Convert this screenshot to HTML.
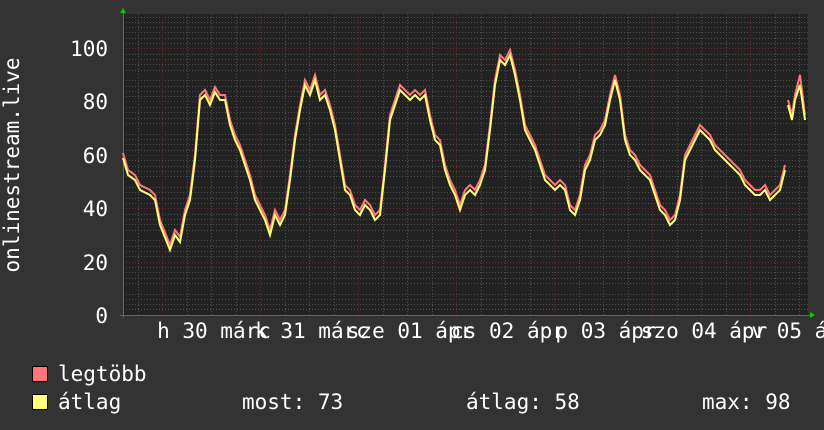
<!DOCTYPE html>
<html><head><meta charset="utf-8"><style>
body{margin:0;background:#333;}
svg{display:block}
text{font-family:"DejaVu Sans Mono","Liberation Mono",monospace;fill:#fff;font-size:21px}
</style></head><body>
<svg width="824" height="430" viewBox="0 0 824 430" xmlns="http://www.w3.org/2000/svg">
<rect width="824" height="430" fill="#333"/>
<rect x="123" y="14" width="685" height="301" fill="#222"/>
<g stroke="#505050" stroke-width="1" stroke-dasharray="1,2" fill="none">
<path d="M123 309.5H808M123 304.5H808M123 299.5H808M123 294.5H808M123 283.5H808M123 278.5H808M123 272.5H808M123 267.5H808M123 256.5H808M123 251.5H808M123 246.5H808M123 240.5H808M123 230.5H808M123 224.5H808M123 219.5H808M123 214.5H808M123 203.5H808M123 198.5H808M123 192.5H808M123 187.5H808M123 176.5H808M123 171.5H808M123 166.5H808M123 160.5H808M123 150.5H808M123 144.5H808M123 139.5H808M123 134.5H808M123 123.5H808M123 118.5H808M123 112.5H808M123 107.5H808M123 96.5H808M123 91.5H808M123 86.5H808M123 80.5H808M123 70.5H808M123 64.5H808M123 59.5H808M123 54.5H808M123 43.5H808M123 38.5H808M123 32.5H808M123 27.5H808M123 22.5H808M123 17.5H808"/>
<path d="M138.5 14V315M187.5 14V315M211.5 14V315M236.5 14V315M285.5 14V315M309.5 14V315M334.5 14V315M383.5 14V315M407.5 14V315M432.5 14V315M481.5 14V315M505.5 14V315M530.5 14V315M579.5 14V315M603.5 14V315M628.5 14V315M677.5 14V315M701.5 14V315M726.5 14V315M775.5 14V315M799.5 14V315"/>
</g>
<g stroke="#6a2a2a" stroke-width="1" stroke-dasharray="1,2" fill="none">
<path d="M123 48.5H808M123 101.5H808M123 155.5H808M123 208.5H808M123 262.5H808"/>
<path d="M162.5 14V318M260.5 14V318M358.5 14V318M456.5 14V318M554.5 14V318M652.5 14V318M750.5 14V318"/>
</g>
<line x1="120" y1="315.5" x2="812" y2="315.5" stroke="#666"/>
<line x1="123.5" y1="12" x2="123.5" y2="318" stroke="#666"/>
<polygon points="120,13 126,13 123,8" fill="#0c0"/>
<polygon points="810,312 810,318 815,315" fill="#0c0"/>
<g transform="translate(0,-5)">
<polyline fill="none" stroke="#f77" stroke-width="2" points="123,158 128,175 135,180 140,190 150,195 155,200 160,225 170,250 175,235 180,242 185,215 190,200 195,160 200,100 205,95 210,105 215,92 220,100 225,100 230,125 235,140 240,150 245,165 250,180 255,200 260,210 265,220 270,235 275,215 280,225 285,215 290,180 295,140 300,110 305,85 310,95 315,80 320,100 325,95 330,110 335,130 340,160 345,190 350,195 355,210 360,215 365,205 370,210 375,220 380,215 385,170 390,120 395,105 400,90 405,95 410,100 415,95 420,100 425,95 430,120 435,140 440,145 445,170 450,185 455,195 460,210 465,195 470,190 475,195 480,185 485,170 490,130 495,85 500,60 505,65 510,55 515,75 520,100 525,130 530,140 535,150 540,165 545,180 550,185 555,190 560,185 565,190 570,210 575,215 580,200 585,170 590,160 595,140 600,135 605,125 610,100 615,80 620,100 625,140 630,155 635,160 640,170 645,175 650,180 655,195 660,210 665,215 670,225 675,220 680,200 685,160 690,150 695,140 700,130 705,135 710,140 715,150 720,155 725,160 730,165 735,170 740,175 745,185 750,190 755,195 760,195 765,190 770,200 775,195 780,190 785,170"/>
<polyline fill="none" stroke="#f77" stroke-width="2" points="788,105 792,120 795,100 800,80 805,120"/>
</g>
<polyline fill="none" stroke="#ff7" stroke-width="2" points="123,158 128,175 135,180 140,190 150,195 155,200 160,225 170,250 175,235 180,242 185,215 190,200 195,160 200,100 205,95 210,105 215,92 220,100 225,100 230,125 235,140 240,150 245,165 250,180 255,200 260,210 265,220 270,235 275,215 280,225 285,215 290,180 295,140 300,110 305,85 310,95 315,80 320,100 325,95 330,110 335,130 340,160 345,190 350,195 355,210 360,215 365,205 370,210 375,220 380,215 385,170 390,120 395,105 400,90 405,95 410,100 415,95 420,100 425,95 430,120 435,140 440,145 445,170 450,185 455,195 460,210 465,195 470,190 475,195 480,185 485,170 490,130 495,85 500,60 505,65 510,55 515,75 520,100 525,130 530,140 535,150 540,165 545,180 550,185 555,190 560,185 565,190 570,210 575,215 580,200 585,170 590,160 595,140 600,135 605,125 610,100 615,80 620,100 625,140 630,155 635,160 640,170 645,175 650,180 655,195 660,210 665,215 670,225 675,220 680,200 685,160 690,150 695,140 700,130 705,135 710,140 715,150 720,155 725,160 730,165 735,170 740,175 745,185 750,190 755,195 760,195 765,190 770,200 775,195 780,190 785,170"/>
<polyline fill="none" stroke="#ff7" stroke-width="2" points="788,105 792,120 795,100 800,85 805,120"/>
<g text-anchor="end">
<text x="108" y="56">100</text>
<text x="108" y="109">80</text>
<text x="108" y="163">60</text>
<text x="108" y="216">40</text>
<text x="108" y="270">20</text>
<text x="108" y="323">0</text>
</g>
<text transform="translate(19,165) rotate(-90)" text-anchor="middle">onlinestream.live</text>
<g text-anchor="middle">
<text x="214" y="338">h 30 márc</text>
<text x="312" y="338">k 31 márc</text>
<text x="410" y="338">sze 01 ápr</text>
<text x="508" y="338">cs 02 ápr</text>
<text x="606" y="338">p 03 ápr</text>
<text x="704" y="338">szo 04 ápr</text>
<text x="802" y="338">v 05 ápr</text>
</g>
<rect x="32.5" y="366.5" width="15" height="15" fill="#f77" stroke="#000"/>
<rect x="32.5" y="394.5" width="15" height="15" fill="#ff7" stroke="#000"/>
<text x="58" y="381">legtöbb</text>
<text x="58" y="409">átlag</text>
<text x="242" y="409">most: 73</text>
<text x="466" y="409">átlag: 58</text>
<text x="702" y="409">max: 98</text>
</svg>
</body></html>
